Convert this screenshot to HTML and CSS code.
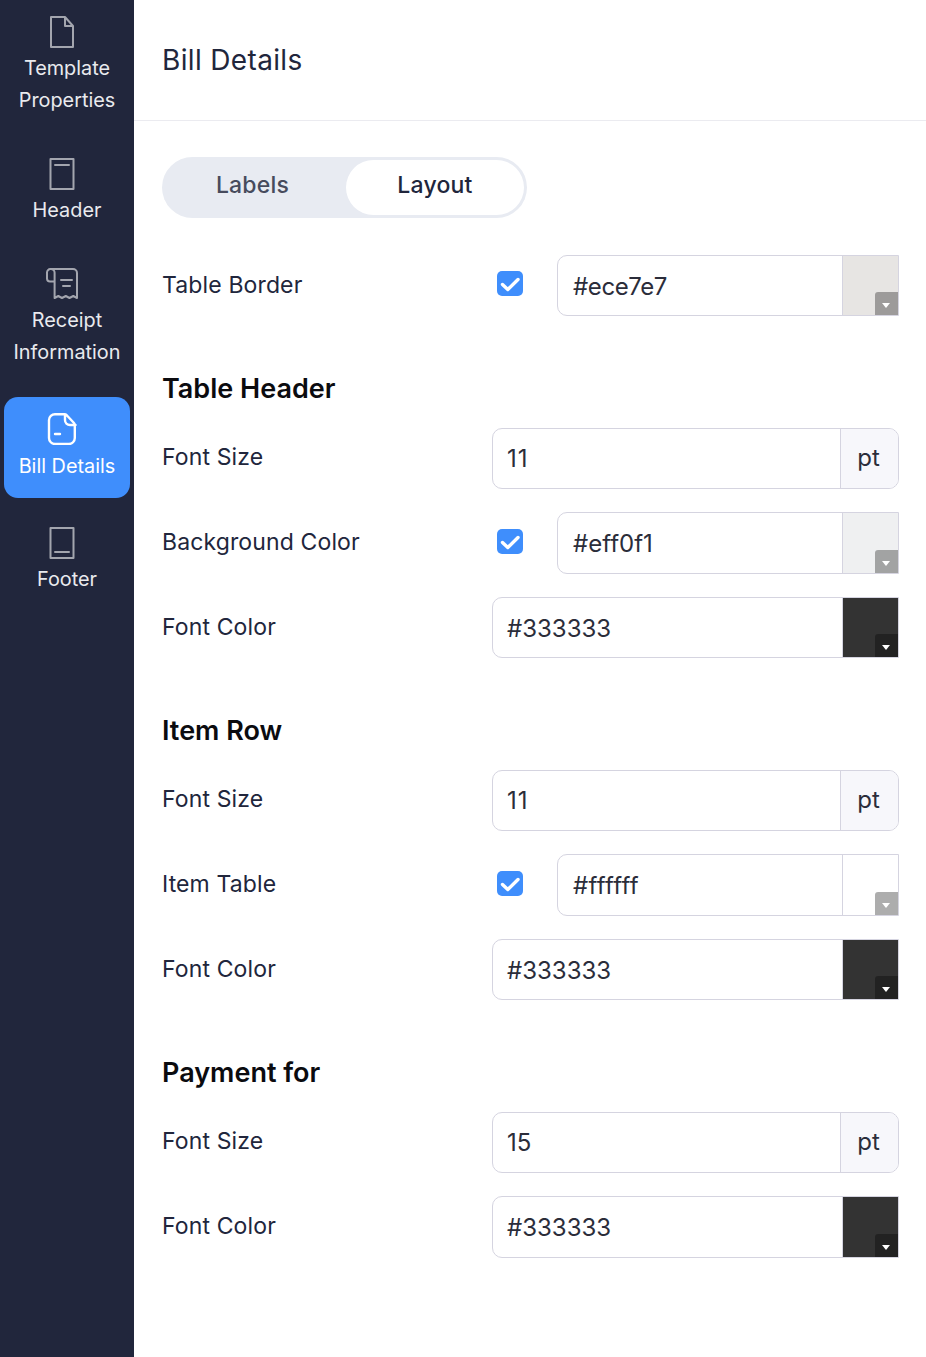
FILE: index.html
```html
<!DOCTYPE html>
<html lang="en">
<head>
<meta charset="utf-8">
<title>Bill Details</title>
<link rel="stylesheet" href="styles.css">
</head>
<body>
<div class="app">
  <nav class="sidebar">
    <a class="nav-item">
      <svg class="nav-icon" viewBox="0 0 32 32"><path d="M5 1h14l8 9v21H5z M19 1v9h8"/></svg>
      <span>Template<br>Properties</span>
    </a>
    <a class="nav-item">
      <svg class="nav-icon" viewBox="0 0 32 32"><path d="M4.500 1h23v30h-23z M9 7h14"/></svg>
      <span>Header</span>
    </a>
    <a class="nav-item">
      <svg class="nav-icon" viewBox="0 0 32 32"><path d="M4.500 1H27a4 4 0 0 1 4 4v25l-3.700-2-3.800 2-3.700-2-3.800 2-3.700-2-3.700 2V5a3.700 3.700 0 0 0-3.800-4A3.500 3.500 0 0 0 1 4.500v6a3 3 0 0 0 3 3h4.500 M15 12h11 M17 18h7"/></svg>
      <span>Receipt<br>Information</span>
    </a>
    <a class="nav-item active">
      <svg class="nav-icon" viewBox="0 0 32 32"><path d="M9 1.200h9.500a3 3 0 0 1 2 .8l7.500 8a3 3 0 0 1 .8 2v13a6 6 0 0 1-6 6H9a6 6 0 0 1-6-6V7a6 6 0 0 1 6-5.800z M19 1.500V7a5 5 0 0 0 5 5h5.500 M9 21h5"/></svg>
      <span>Bill Details</span>
    </a>
    <a class="nav-item">
      <svg class="nav-icon" viewBox="0 0 32 32"><path d="M4.500 1h23v30h-23z M9 25h14"/></svg>
      <span>Footer</span>
    </a>
  </nav>

  <main class="main">
    <header class="topbar"><h1>Bill Details</h1></header>
    <div class="content">
      <div class="toggle">
        <button class="tab">Labels</button>
        <button class="tab selected">Layout</button>
      </div>

      <div class="row first">
        <label class="low">Table Border</label>
        <div class="field">
          <span class="check"><svg viewBox="0 0 26 25"><path d="M5.500 13.500l5.300 5L21 8.500"/></svg></span>
          <div class="box"><span class="val tight">#ece7e7</span><span class="swatch sw-border"><i class="drop"></i></span></div>
        </div>
      </div>

      <h2>Table Header</h2>
      <div class="row">
        <label class="high">Font Size</label>
        <div class="field"><div class="box"><span class="val wide">11</span><span class="unit">pt</span></div></div>
      </div>
      <div class="row">
        <label>Background Color</label>
        <div class="field">
          <span class="check"><svg viewBox="0 0 26 25"><path d="M5.500 13.500l5.300 5L21 8.500"/></svg></span>
          <div class="box"><span class="val">#eff0f1</span><span class="swatch sw-bg"><i class="drop"></i></span></div>
        </div>
      </div>
      <div class="row">
        <label class="low">Font Color</label>
        <div class="field"><div class="box"><span class="val">#333333</span><span class="swatch sw-dark"><i class="drop"></i></span></div></div>
      </div>

      <h2>Item Row</h2>
      <div class="row">
        <label class="high">Font Size</label>
        <div class="field"><div class="box"><span class="val wide">11</span><span class="unit">pt</span></div></div>
      </div>
      <div class="row">
        <label>Item Table</label>
        <div class="field">
          <span class="check"><svg viewBox="0 0 26 25"><path d="M5.500 13.500l5.300 5L21 8.500"/></svg></span>
          <div class="box"><span class="val loose">#ffffff</span><span class="swatch sw-white"><i class="drop"></i></span></div>
        </div>
      </div>
      <div class="row">
        <label class="low">Font Color</label>
        <div class="field"><div class="box"><span class="val">#333333</span><span class="swatch sw-dark"><i class="drop"></i></span></div></div>
      </div>

      <h2>Payment for</h2>
      <div class="row">
        <label class="high">Font Size</label>
        <div class="field"><div class="box"><span class="val">15</span><span class="unit">pt</span></div></div>
      </div>
      <div class="row">
        <label>Font Color</label>
        <div class="field"><div class="box"><span class="val">#333333</span><span class="swatch sw-dark"><i class="drop"></i></span></div></div>
      </div>
    </div>
  </main>
</div>
</body>
</html>
```

FILE: styles.css
```css
* { box-sizing: border-box; }
html, body { margin: 0; height: 100%; }
body {
  font-family: Inter, "Liberation Sans", sans-serif;
  color: #21263c;
  background: #fff;
  overflow: hidden;
}
.app { display: flex; height: 1357px; }

.sidebar {
  width: 134px;
  flex: none;
  background: #21263c;
  display: flex;
  flex-direction: column;
  gap: 10px;
  padding: 0 4px;
}
.nav-item {
  display: flex;
  flex-direction: column;
  align-items: center;
  gap: 4px;
  padding: 16px 0;
  border-radius: 14px;
  color: #e9eaee;
  font-size: 19.85px;
  line-height: 32px;
  text-align: center;
}
.nav-icon {
  width: 32px;
  height: 32px;
  margin-right: 10px;
  fill: none;
  stroke: #a3a5ae;
  stroke-width: 2;
  stroke-linejoin: round;
  stroke-linecap: round;
}
.nav-item.active {
  background: #3f8efc;
  color: #fff;
  margin: 3px 0;
  gap: 5px;
}
.nav-item.active .nav-icon { stroke: #fff; stroke-width: 2.4; }

.main { flex: 1; min-width: 0; }
.topbar {
  height: 121px;
  border-bottom: 1px solid #ebebf0;
  padding: 0 27px 0 28px;
  display: flex;
  align-items: center;
}
h1 {
  margin: 0;
  font-size: 28px;
  font-weight: 400;
  letter-spacing: .35px;
  line-height: 38px;
  color: #21263c;
}
.content { padding: 36px 27px 0 28px; }

.toggle {
  width: 365px;
  height: 61px;
  background: #e8ebf2;
  border-radius: 31px;
  padding: 3px;
  display: flex;
}
.tab {
  border: 0;
  background: none;
  font: 500 23px/1 Inter, sans-serif;
  letter-spacing: .2px;
  color: #474b5d;
  flex: 1;
  border-radius: 28px;
  padding: 0 6px 4px 0;
}
.tab.selected {
  flex: none;
  width: 178px;
  background: #fff;
  color: #21263c;
  padding-right: 0;
}

.row {
  display: flex;
  align-items: center;
  height: 61.4px;
  margin-top: 23px;
}
.row.first { margin-top: 36.8px; }
.row label {
  width: 330px;
  flex: none;
  font-size: 23px;
  letter-spacing: .13px;
  line-height: 32px;
  color: #21263c;
  padding-bottom: 2px;
}
.row label.low { padding-bottom: 0; }
.row label.high { padding-bottom: 4px; }
h2 {
  margin: 56px 0 -1.2px;
  font-size: 27px;
  font-weight: 600;
  line-height: 34px;
  color: #0b0b0f;
}
.field {
  flex: 1;
  display: flex;
  align-items: center;
}
.check {
  width: 26px;
  height: 25px;
  margin: 0 34px 3px 5px;
  flex: none;
  background: #3f8efc;
  border-radius: 5px;
  display: block;
}
.check svg {
  display: block;
  fill: none;
  stroke: #fff;
  stroke-width: 3.4;
  stroke-linecap: round;
  stroke-linejoin: round;
}
.box {
  flex: 1;
  height: 61.4px;
  display: flex;
  border: 1px solid #d5d4e0;
  border-radius: 10px;
  overflow: hidden;
  background: #fff;
}
.val {
  flex: 1;
  font-size: 24px;
  line-height: 59px;
  padding-left: 14px;
  color: #2b2d3a;
}
.val.wide { letter-spacing: 1px; }
.val.tight { letter-spacing: -.4px; }
.val.loose { letter-spacing: .3px; }
.unit {
  width: 58px;
  flex: none;
  background: #f7f7fb;
  border-left: 1px solid #d5d4e0;
  font-size: 24px;
  line-height: 57px;
  text-align: center;
  padding-right: 2px;
  color: #2b2d3a;
}
.field .check + .box .val { padding-left: 15px; }
.swatch {
  width: 56px;
  flex: none;
  position: relative;
  border-left: 1px solid #d5d4e0;
}
.box:has(.swatch) { border-radius: 10px 0 0 10px; }
.box:has(.swatch) .val { line-height: 61px; }
.sw-border { background: #e7e5e3; }
.sw-bg { background: #eff0f1; }
.sw-dark { background: #333333; }
.sw-white { background: #ffffff; }
.drop {
  position: absolute;
  right: 0;
  bottom: 0;
  width: 23px;
  height: 23px;
  background: rgba(0, 0, 0, .32);
  border-radius: 3px 0 0 0;
}
.drop::after {
  content: "";
  position: absolute;
  left: 7px;
  top: 11px;
  border-left: 4.5px solid transparent;
  border-right: 4.5px solid transparent;
  border-top: 5px solid #fff;
}
```
